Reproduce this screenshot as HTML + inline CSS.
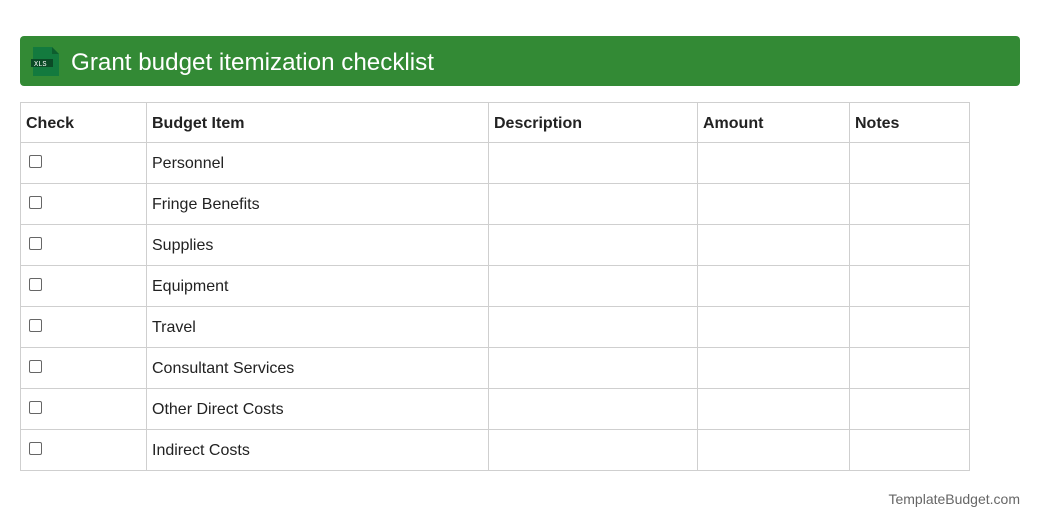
<!DOCTYPE html>
<html><head><meta charset="utf-8"><style>
body{margin:0;background:#fff;font-family:"Liberation Sans",Roboto,sans-serif;width:1040px;height:528px;position:relative;overflow:hidden}
.hdr{position:absolute;left:20px;top:36px;width:1000px;height:50px;background:#338a35;border-radius:4px}
.hdr .t{position:absolute;left:51px;top:13px;color:#fff;font-size:24.2px;line-height:28px}
table{position:absolute;left:20px;top:102px;border-collapse:collapse;font-size:16px;color:#222}
td,th{border:1px solid #cfcfcf;padding:2px 5px 0;text-align:left;height:40px;box-sizing:border-box}
th{font-weight:bold;height:40px}
tr.r td{height:41px}
.cb{display:inline-block;width:11px;height:11px;border:1px solid #666;border-radius:2px;margin-left:3px;margin-top:-4px;vertical-align:middle}
.ft{position:absolute;right:20px;top:491px;font-size:14px;color:#666}
</style></head><body>
<div class="hdr">
<svg style="position:absolute;left:11px;top:10px" width="30" height="32" viewBox="0 0 30 32">
<path d="M2 1h19l7 7v22h-26z" fill="#137a3e"/>
<path d="M21 1v7h7z" fill="#0d5e2e"/>
<rect x="0" y="13" width="22" height="8" fill="#0b4a26"/>
<text x="3" y="20" font-size="7" fill="#fff" font-family="Liberation Mono,monospace">XLS</text>
</svg>
<div class="t">Grant budget itemization checklist</div>
</div>
<table>
<tr><th style="width:126px">Check</th><th style="width:342px">Budget Item</th><th style="width:209px">Description</th><th style="width:152px">Amount</th><th style="width:120px">Notes</th></tr>
<tr class="r"><td><span class="cb"></span></td><td>Personnel</td><td></td><td></td><td></td></tr>
<tr class="r"><td><span class="cb"></span></td><td>Fringe Benefits</td><td></td><td></td><td></td></tr>
<tr class="r"><td><span class="cb"></span></td><td>Supplies</td><td></td><td></td><td></td></tr>
<tr class="r"><td><span class="cb"></span></td><td>Equipment</td><td></td><td></td><td></td></tr>
<tr class="r"><td><span class="cb"></span></td><td>Travel</td><td></td><td></td><td></td></tr>
<tr class="r"><td><span class="cb"></span></td><td>Consultant Services</td><td></td><td></td><td></td></tr>
<tr class="r"><td><span class="cb"></span></td><td>Other Direct Costs</td><td></td><td></td><td></td></tr>
<tr class="r"><td><span class="cb"></span></td><td>Indirect Costs</td><td></td><td></td><td></td></tr>
</table>
<div class="ft">TemplateBudget.com</div>
</body></html>
